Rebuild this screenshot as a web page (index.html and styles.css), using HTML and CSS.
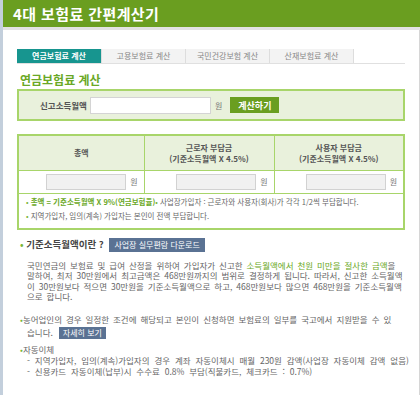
FILE: index.html
```html
<!DOCTYPE html>
<html lang="ko">
<head>
<meta charset="utf-8">
<link rel="stylesheet" href="styles.css">
</head>
<body>
<div class="frame">
  <header class="top"><h1>4대 보험료 간편계산기</h1></header>
  <div class="main">
    <div class="content">
      <ul class="tabs">
        <li class="tab on">연금보험료 계산</li>
        <li class="tab">고용보험료 계산</li>
        <li class="tab">국민건강보험 계산</li>
        <li class="tab">산재보험료 계산</li>
      </ul>
      <h2 class="title">연금보험료 계산</h2>
      <div class="inbox">
        <span class="lbl">신고소득월액</span>
        <span class="field wide"></span>
        <span class="won">원</span>
        <span class="calc">계산하기</span>
      </div>
      <table class="result">
        <tr class="head">
          <th class="c1">총액</th>
          <th class="c2">근로자 부담금<br>(기준소득월액 X 4.5%)</th>
          <th class="c3">사용자 부담금<br>(기준소득월액 X 4.5%)</th>
        </tr>
        <tr class="vals">
          <td><span class="field"></span><span class="won">원</span></td>
          <td><span class="field"></span><span class="won">원</span></td>
          <td><span class="field"></span><span class="won">원</span></td>
        </tr>
        <tr class="notes">
          <td colspan="3">
            <p><span class="dot">•</span> <b class="g">총액 = 기준소득월액 X 9%(연금보험율)</b><span class="dot">•</span> 사업장가입자 : 근로자와 사용자(회사)가 각각 1/2씩 부담합니다.</p>
            <p><span class="dot">•</span> 지역가입자, 임의(계속) 가입자는 본인이 전액 부담합니다.</p>
          </td>
        </tr>
      </table>
      <div class="info">
        <div class="q"><span class="dot">•</span> 기준소득월액이란 ? <span class="btn big">사업장 실무편람 다운로드</span></div>
        <p class="para">국민연금의 보험료 및 급여 산정을 위하여 가입자가 신고한 <span class="g">소득월액에서 천원 미만을 절사한 금액</span>을<br>말하여, 최저 30만원에서 최고금액은 468만원까지의 범위로 결정하게 됩니다. 따라서, 신고한 소득월액<br>이 30만원보다 적으면 30만원을 기준소득월액으로 하고, 468만원보다 많으면 468만원을 기준소득월액<br>으로 합니다.</p>
        <p class="item"><span class="dot">•</span>농어업인의 경우 일정한 조건에 해당되고 본인이 신청하면 보험료의 일부를 국고에서 지원받을 수 있<br><span class="cont">습니다. <span class="btn">자세히 보기</span></span></p>
        <div class="auto">
          <div><span class="dot">•</span>자동이체</div>
          <div class="sub">- 지역가입자, 임의(계속)가입자의 경우 계좌 자동이체시 매월 230원 감액(사업장 자동이체 감액 없음)</div>
          <div class="sub">- 신용카드 자동이체(납부)시 수수료 0.8% 부담(직불카드, 체크카드 : 0.7%)</div>
        </div>
      </div>
    </div>
  </div>
</div>
</body>
</html>
```

FILE: styles.css
```css
* { box-sizing: border-box; }
html, body { margin: 0; padding: 0; background: #fff; }
body {
  font-family: "Noto Sans CJK KR", "Noto Sans", sans-serif;
  color: #555;
  font-size: 9px;
  width: 420px;
  height: 395px;
  overflow: hidden;
}
.frame {
  height: 395px;
  border-left: 3px solid #c3cfdc;
  display: flex;
  flex-direction: column;
}
.top {
  height: 30px;
  background: #6a9e20;
  border-bottom: 3px solid #e2e2e2;
  display: flex;
  align-items: center;
  padding-left: 10px;
}
.top h1 {
  margin: 0;
  color: #fff;
  font-size: 15px;
  font-weight: bold;
  letter-spacing: 0.4px;
}
.main {
  flex: 1;
  width: 417px;
  border-right: 1px solid #d6d6d6;
}
.content {
  padding: 19px 0 0 14px;
  width: 402px;
}
.tabs {
  list-style: none;
  margin: 0;
  padding: 0;
  display: flex;
  border-bottom: 1px solid #e0e0e0;
  height: 15px;
}
.tab {
  width: 84px;
  height: 14px;
  background: #f3f3f3;
  border-right: 1px solid #ddd;
  color: #888;
  font-size: 8px;
  text-align: center;
  line-height: 14px;
}
.tab.on {
  width: 85px;
  background: #17958f;
  color: #fff;
  font-weight: bold;
}
.title {
  margin: 9px 0 0 3px;
  color: #6aa826;
  font-size: 12px;
  font-weight: bold;
  line-height: 14px;
}
.inbox {
  margin-top: 2px;
  height: 32px;
  background: #e9f1dc;
  border: 2px solid #a8d56a;
  display: flex;
  align-items: center;
  padding-left: 21px;
}
.lbl {
  font-weight: bold;
  color: #555;
  font-size: 8.5px;
  width: 50px;
}
.field {
  display: inline-block;
  width: 80px;
  height: 16px;
  background: #f1f1f1;
  border: 1px solid #d2d2d2;
  vertical-align: middle;
}
.field.wide {
  width: 121px;
  height: 17px;
  background: #fff;
  border-color: #d4d4d4;
}
.won {
  color: #777;
  font-size: 8px;
  margin-left: 4px;
  vertical-align: middle;
}
.calc {
  margin-left: 8px;
  width: 49px;
  height: 16px;
  background: #6a9e20;
  color: #fff;
  font-weight: bold;
  font-size: 9px;
  display: flex;
  align-items: center;
  justify-content: center;
}
.result {
  margin-top: 13px;
  width: 388px;
  border-collapse: collapse;
  border: 2px solid #a8d56a;
}
.result th {
  height: 35px;
  background: #e9f1dc;
  border: 1px solid #a8d56a;
  color: #555;
  font-size: 8px;
  font-weight: bold;
  line-height: 11px;
  padding: 0;
}
.c1 { width: 126px; }
.c2 { width: 130px; }
.vals td {
  height: 23px;
  text-align: right;
  padding: 0 6px 0 0;
  border: 1px solid #a8d56a;
}
.notes td {
  padding: 1px 0 5px 7px;
  border: 1px solid #a8d56a;
}
.notes p {
  margin: 0;
  line-height: 14px;
  font-size: 7.5px;
  color: #666;
}
.dot { color: #7ab637; }
.g { color: #6aa826; }
.notes b.g { font-weight: bold; }
.info { padding-left: 3px; margin-top: 7px; }
.q {
  font-weight: bold;
  font-size: 9.5px;
  color: #444;
  line-height: 14px;
}
.btn {
  display: inline-block;
  background: #5a7293;
  color: #fff;
  font-weight: normal;
  font-size: 8px;
  line-height: 12px;
  padding: 0 4px;
  margin-left: 2px;
  word-spacing: 0;
}
.btn.big {
  font-size: 8px;
  line-height: 14px;
  padding: 0 5px;
  margin-left: 3px;
}
.para {
  margin: 8px 0 0 7px;
  line-height: 10.5px;
  font-size: 8.5px;
  word-spacing: 1.6px;
  color: #666;
  white-space: nowrap;
}
.item {
  margin: 11px 0 0 0;
  line-height: 13px;
  font-size: 8.5px;
  word-spacing: 1.6px;
  color: #666;
  white-space: nowrap;
}
.cont { padding-left: 7px; }
.auto {
  margin-top: 5px;
  font-size: 8.5px;
  color: #666;
  line-height: 11px;
  word-spacing: 2.5px;
  white-space: nowrap;
}
.sub { padding-left: 7px; }
```
